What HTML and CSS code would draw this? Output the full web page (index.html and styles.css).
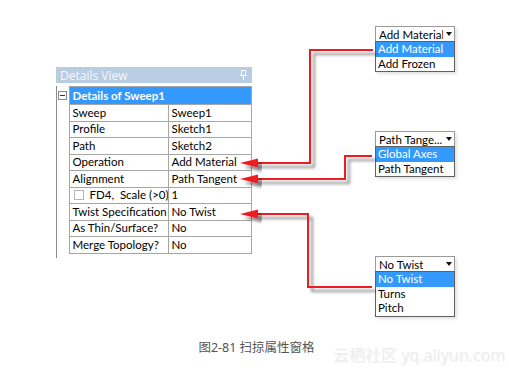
FILE: index.html
```html
<!DOCTYPE html>
<html lang="zh-CN">
<head>
    <meta charset="UTF-8">
    <title>扫掠属性窗格</title>
    <link rel="stylesheet" href="styles.css">
</head>
<body>
    <div class="figure">
        <div class="details">
            <div class="details-title">
                <span>Details View</span>
                <svg class="pin" width="7" height="10" viewBox="0 0 7 10">
                    <rect x="1.5" y="0.5" width="4" height="5" fill="none" stroke="#fff" stroke-width="1"/>
                    <rect x="0" y="5" width="7" height="1" fill="#fff"/>
                    <rect x="3" y="6" width="1" height="4" fill="#fff"/>
                </svg>
            </div>
            <div class="details-body">
                <table class="props">
                    <colgroup>
                        <col class="col-gutter">
                        <col class="col-name">
                        <col class="col-value">
                    </colgroup>
                    <tr class="props-head">
                        <td class="gutter"><span class="collapse"></span></td>
                        <td colspan="2">Details of Sweep1</td>
                    </tr>
                    <tr><td class="gutter"></td><td>Sweep</td><td>Sweep1</td></tr>
                    <tr><td class="gutter"></td><td>Profile</td><td>Sketch1</td></tr>
                    <tr><td class="gutter"></td><td>Path</td><td>Sketch2</td></tr>
                    <tr><td class="gutter"></td><td>Operation</td><td>Add Material</td></tr>
                    <tr><td class="gutter"></td><td>Alignment</td><td>Path Tangent</td></tr>
                    <tr><td class="gutter"></td><td><span class="check"></span>FD4,&nbsp; Scale (&gt;0)</td><td>1</td></tr>
                    <tr><td class="gutter"></td><td>Twist Specification</td><td>No Twist</td></tr>
                    <tr><td class="gutter"></td><td>As Thin/Surface?</td><td>No</td></tr>
                    <tr><td class="gutter"></td><td>Merge Topology?</td><td>No</td></tr>
                </table>
            </div>
        </div>

        <div class="combo combo-operation">
            <div class="combo-box"><span class="combo-text">Add Material</span><span class="combo-arrow"></span></div>
            <ul class="combo-list">
                <li class="selected">Add Material</li>
                <li>Add Frozen</li>
            </ul>
        </div>

        <div class="combo combo-alignment">
            <div class="combo-box"><span class="combo-text">Path Tange...</span><span class="combo-arrow"></span></div>
            <ul class="combo-list">
                <li class="selected">Global Axes</li>
                <li>Path Tangent</li>
            </ul>
        </div>

        <div class="combo combo-twist">
            <div class="combo-box"><span class="combo-text">No Twist</span><span class="combo-arrow"></span></div>
            <ul class="combo-list">
                <li class="selected">No Twist</li>
                <li>Turns</li>
                <li>Pitch</li>
            </ul>
        </div>

        <svg class="arrows" width="509" height="339" viewBox="0 0 509 339">
            <defs>
                <filter id="shade" x="-20%" y="-20%" width="140%" height="140%">
                    <feDropShadow dx="4" dy="4" stdDeviation="1.6" flood-color="#000" flood-opacity="0.45"/>
                </filter>
            </defs>
            <g filter="url(#shade)" fill="none" stroke="#ee1c24" stroke-width="2">
                <path d="M373 50 H310 V163 H255"/>
                <path d="M372 156 H345 V179 H255"/>
                <path d="M372 287 H308 V214 H255"/>
            </g>
            <g filter="url(#shade)" fill="#ee1c24">
                <polygon points="240,163 258,158.5 258,167.5"/>
                <polygon points="240,179 258,174.5 258,183.5"/>
                <polygon points="240,214 258,209.5 258,218.5"/>
            </g>
        </svg>
    </div>

    <div class="caption">图2-81 扫掠属性窗格</div>
    <div class="watermark">云栖社区 yq.aliyun.com</div>
</body>
</html>
```

FILE: styles.css
```css
* {
    box-sizing: border-box;
    margin: 0;
    padding: 0;
}

body {
    width: 509px;
    height: 374px;
    background: #fff;
    font-family: 'Lato', 'Open Sans', sans-serif;
    color: #000;
    position: relative;
    overflow: hidden;
}

.figure {
    position: relative;
    width: 509px;
    height: 339px;
}

/* details view panel */
.details {
    position: absolute;
    left: 56px;
    top: 67px;
    width: 196px;
}

.details-title {
    display: flex;
    justify-content: space-between;
    align-items: center;
    height: 16px;
    padding: 0 5px 0 4px;
    background-color: #b8cde2;
    color: #f5f8fc;
    font-family: 'Open Sans', sans-serif;
    font-size: 12px;
}

.details-body {
    margin-top: 3px;
    height: 172px;
    border-left: 1px solid #8c8c8c;
}

.props {
    border-collapse: collapse;
    width: 194px;
    font-size: 11.5px;
    table-layout: fixed;
}

.col-gutter { width: 12px; }
.col-name { width: 99px; }
.col-value { width: 83px; }

.props td {
    height: 16.5px;
    padding: 0 0 0 3px;
    border: 1px solid #a6a6a6;
    white-space: nowrap;
    overflow: hidden;
    line-height: 14px;
}

.props td.gutter {
    border-top: none;
    border-bottom: none;
    border-left: none;
    padding: 0;
}

.props-head td {
    height: 18px;
    background-color: #3399ff;
    color: #fff;
    font-weight: bold;
}

.props-head td.gutter {
    background-color: #fff;
    text-align: center;
}

.collapse {
    display: inline-block;
    position: relative;
    width: 9px;
    height: 9px;
    border: 1px solid #8a8a8a;
    vertical-align: middle;
    margin-top: -2px;
}

.collapse::after {
    content: "";
    position: absolute;
    left: 1px;
    top: 3px;
    width: 5px;
    height: 1px;
    background-color: #333;
}

.check {
    display: inline-block;
    width: 10px;
    height: 10px;
    border: 1px solid #b5b5b5;
    margin: 0 6px 0 1px;
    vertical-align: -1px;
}

/* combo boxes */
.combo {
    position: absolute;
    left: 375px;
    width: 80px;
    font-size: 11.5px;
    box-shadow: 2px 2px 3px rgba(0, 0, 0, 0.12);
}

.combo-operation { top: 26px; }
.combo-alignment { top: 131px; }
.combo-twist { top: 256px; }

.combo-box {
    display: flex;
    justify-content: space-between;
    align-items: center;
    height: 15px;
    padding-left: 3px;
    border: 1px solid #9a9a9a;
    border-bottom: none;
    background: #fff;
    line-height: 13px;
}

.combo-text {
    white-space: nowrap;
    overflow: hidden;
}

.combo-arrow {
    flex-shrink: 0;
    width: 11px;
    height: 13px;
    display: flex;
    align-items: center;
    justify-content: center;
}

.combo-arrow::before {
    content: "";
    border-left: 3.5px solid transparent;
    border-right: 3.5px solid transparent;
    border-top: 4px solid #111;
}

.combo-list {
    list-style: none;
    border: 1px solid #606060;
    background: #fff;
}

.combo-list li {
    height: 14.5px;
    line-height: 14px;
    padding-left: 2px;
    white-space: nowrap;
}

.combo-list li.selected {
    background-color: #3399ff;
    color: #fff;
}

.arrows {
    position: absolute;
    left: 0;
    top: 0;
}

/* caption */
.caption {
    text-align: center;
    padding-left: 4px;
    font-family: 'Noto Sans', 'Noto Sans CJK SC', sans-serif;
    font-size: 12.5px;
    color: #555;
    line-height: 18px;
}

.watermark {
    position: absolute;
    left: 333px;
    top: 342px;
    font-family: 'Noto Sans', 'Noto Sans CJK SC', sans-serif;
    font-size: 16px;
    color: #eeeeee;
    text-shadow: 1px 1px 0 #f8f8f8;
    white-space: nowrap;
}
```
